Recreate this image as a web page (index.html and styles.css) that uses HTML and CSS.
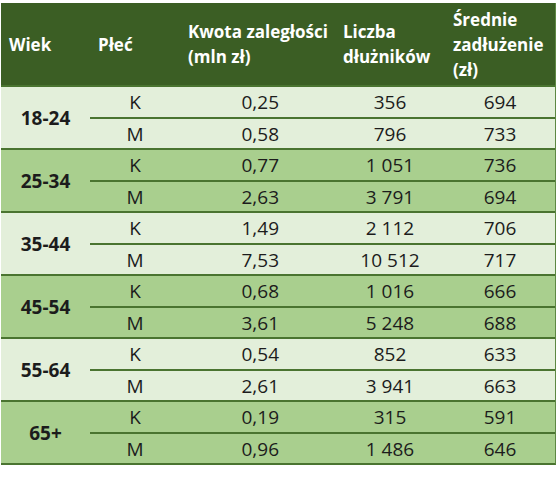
FILE: index.html
```html
<!DOCTYPE html>
<html>
<head>
  <title>Zaległości według wieku</title>
  <link rel="stylesheet" href="styles.css">
</head>
<body>
  <table class="debt-table">
    <thead>
      <tr>
        <th class="col-age">Wiek</th>
        <th class="col-sex">Płeć</th>
        <th class="col-amount">Kwota zaległości<br>(mln zł)</th>
        <th class="col-count">Liczba<br>dłużników</th>
        <th class="col-avg">Średnie<br>zadłużenie<br>(zł)</th>
      </tr>
    </thead>
    <tbody class="light">
      <tr class="k"><td class="age" rowspan="2">18-24</td><td>K</td><td class="num">0,25</td><td>356</td><td>694</td></tr>
      <tr class="m"><td>M</td><td class="num">0,58</td><td>796</td><td>733</td></tr>
    </tbody>
    <tbody class="dark">
      <tr class="k"><td class="age" rowspan="2">25-34</td><td>K</td><td class="num">0,77</td><td>1 051</td><td>736</td></tr>
      <tr class="m"><td>M</td><td class="num">2,63</td><td>3 791</td><td>694</td></tr>
    </tbody>
    <tbody class="light">
      <tr class="k"><td class="age" rowspan="2">35-44</td><td>K</td><td class="num">1,49</td><td>2 112</td><td>706</td></tr>
      <tr class="m"><td>M</td><td class="num">7,53</td><td>10 512</td><td>717</td></tr>
    </tbody>
    <tbody class="dark">
      <tr class="k"><td class="age" rowspan="2">45-54</td><td>K</td><td class="num">0,68</td><td>1 016</td><td>666</td></tr>
      <tr class="m"><td>M</td><td class="num">3,61</td><td>5 248</td><td>688</td></tr>
    </tbody>
    <tbody class="light">
      <tr class="k"><td class="age" rowspan="2">55-64</td><td>K</td><td class="num">0,54</td><td>852</td><td>633</td></tr>
      <tr class="m"><td>M</td><td class="num">2,61</td><td>3 941</td><td>663</td></tr>
    </tbody>
    <tbody class="dark">
      <tr class="k"><td class="age" rowspan="2">65+</td><td>K</td><td class="num">0,19</td><td>315</td><td>591</td></tr>
      <tr class="m"><td>M</td><td class="num">0,96</td><td>1 486</td><td>646</td></tr>
    </tbody>
  </table>
</body>
</html>
```

FILE: styles.css
```css
body {
  margin: 0;
  padding: 0;
  background: #ffffff;
  font-family: "Open Sans", "Liberation Sans", sans-serif;
}

.debt-table {
  margin: 3px 0 0 1px;
  width: 554px;
  border-collapse: separate;
  border-spacing: 0;
  table-layout: fixed;
  color: #1c1c1c;
  border-bottom: 2px solid #4a7430;
  border-right: 1px solid #5d8843;
}

.debt-table th {
  height: 82px;
  padding: 0 0 0 8px;
  background: #3b5e24;
  color: #ffffff;
  font-size: 17px;
  font-weight: bold;
  line-height: 25px;
  text-align: left;
  vertical-align: middle;
  box-sizing: border-box;
}

.col-age { width: 89px; }
.col-sex { width: 90px; }
.col-amount { width: 155px; }
.col-count { width: 110px; }
.col-avg { width: 110px; }

.debt-table td {
  padding: 0;
  font-size: 19px;
  text-align: center;
  vertical-align: middle;
  line-height: 26px;
}

.debt-table td.num {
  text-align: right;
  padding-right: 56px;
}

.debt-table td.age {
  font-weight: bold;
  border-top: 2px solid #4a7430;
}

.debt-table tr.k td {
  border-top: 2px solid #4a7430;
}

.debt-table tr.m td {
  border-top: 2px solid #4a7430;
}

.debt-table tr.k {
  height: 32px;
}

.debt-table tr.m {
  height: 31px;
}

.light td {
  background: #e3efda;
}

.dark td {
  background: #a9cf8e;
}
```
